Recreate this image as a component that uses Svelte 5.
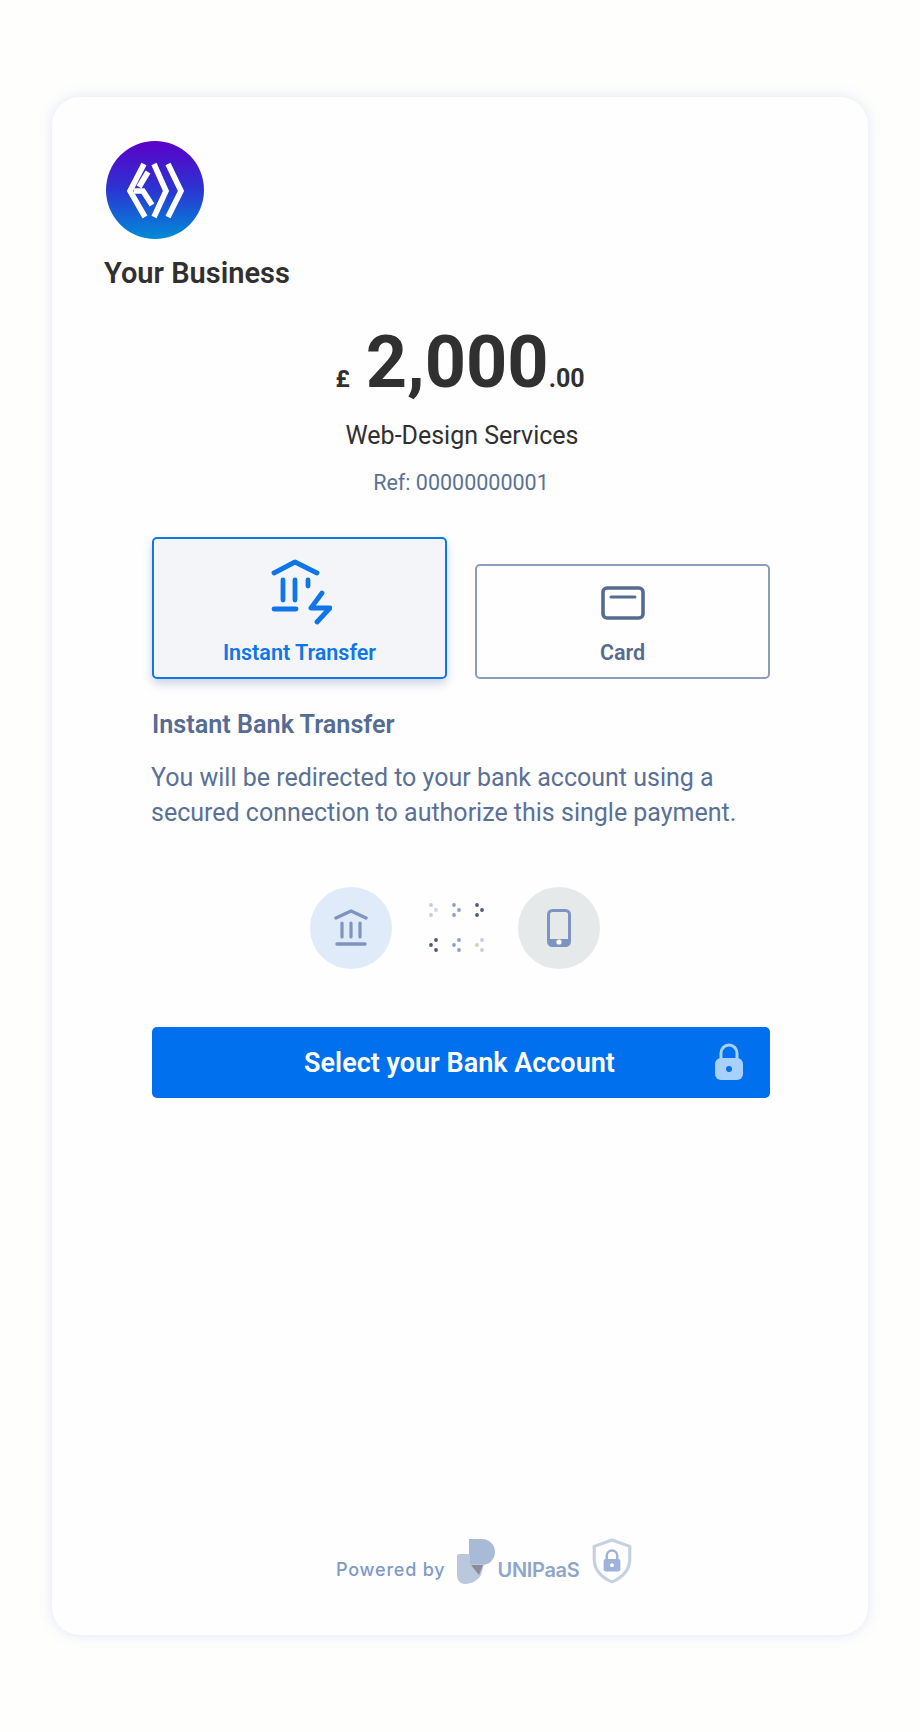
<script>
  let method = 'instant';
  const dots = [
    { x: 6, y: 3, c: '#c3cde4' }, { x: 11, y: 8, c: '#ccd5e6' }, { x: 6, y: 13, c: '#c3cde4' },
    { x: 29, y: 3, c: '#8c9fc9' }, { x: 34, y: 8, c: '#8c9fc9' }, { x: 29, y: 13, c: '#8c9fc9' },
    { x: 52, y: 3, c: '#4a5a78' }, { x: 57, y: 8, c: '#4a5a78' }, { x: 52, y: 13, c: '#4a5a78' },
    { x: 11, y: 38, c: '#4a5a78' }, { x: 6, y: 43, c: '#4a5a78' }, { x: 11, y: 48, c: '#4a5a78' },
    { x: 34, y: 38, c: '#8c9fc9' }, { x: 29, y: 43, c: '#8c9fc9' }, { x: 34, y: 48, c: '#8c9fc9' },
    { x: 57, y: 38, c: '#c3cde4' }, { x: 52, y: 43, c: '#ccd5b0' }, { x: 57, y: 48, c: '#c3cde4' }
  ];
</script>

<div class="page">
  <main class="card">
    <header class="merchant">
      <svg class="logo" viewBox="0 0 98 98" width="98" height="98">
        <defs>
          <linearGradient id="logoFill" x1="0" y1="0" x2="0" y2="1">
            <stop offset="0" stop-color="#5c00c8" />
            <stop offset="0.5" stop-color="#2a35d2" />
            <stop offset="1" stop-color="#008cd8" />
          </linearGradient>
        </defs>
        <circle cx="49" cy="49" r="49" fill="url(#logoFill)" />
        <g fill="none" stroke="#fff" stroke-width="5.6">
          <path d="M38 23 L24 50 L39 76" />
          <path d="M48 23 L60 50 L48 76" />
          <path d="M62 23 L75 50 L62 76" />
          <path d="M28 50 H37 L46 64" />
          <path d="M33 46 L42 31" />
        </g>
      </svg>
      <h1>Your Business</h1>
    </header>

    <section class="summary">
      <div class="amount"><span class="currency">£</span><span class="whole">2,000</span><span class="cents">.00</span></div>
      <div class="service">Web-Design Services</div>
      <div class="ref">Ref: 00000000001</div>
    </section>

    <section class="body">
      <div class="methods">
        <button class="method" class:active={method === 'instant'} on:click={() => (method = 'instant')}>
          <svg viewBox="-3 0 64 66" width="64" height="66" fill="none" stroke="currentColor" stroke-width="4.8" stroke-linecap="round" stroke-linejoin="round">
            <path d="M3 14 L24 3 L46 14" />
            <path d="M12 21 V41" />
            <path d="M24 21 V41" />
            <path d="M37 21 V27" />
            <path d="M3 50 H25" />
            <path d="M51 34 L40 49 H59 L46 63" />
          </svg>
          <span>Instant Transfer</span>
        </button>
        <button class="method" class:active={method === 'card'} on:click={() => (method = 'card')}>
          <svg viewBox="0 0 44 34" width="44" height="34" fill="none" stroke="currentColor" stroke-linecap="round">
            <rect x="2" y="2" width="40" height="30" rx="4" stroke-width="3.6" />
            <path d="M10 11 H34" stroke-width="3" />
          </svg>
          <span>Card</span>
        </button>
      </div>

      <h2>Instant Bank Transfer</h2>
      <p>You will be redirected to your bank account using a secured connection to authorize this single payment.</p>

      <div class="flow">
        <div class="bubble bank">
          <svg viewBox="0 0 34 38" width="34" height="38" fill="none" stroke="#7f93c0" stroke-linecap="round" stroke-linejoin="round">
            <path d="M2 9 L17 2 L32 9" stroke-width="3.4" />
            <path d="M8 14 V28 M17 14 V28 M26 14 V28" stroke-width="3.2" />
            <path d="M3 35 H31" stroke-width="3.4" />
          </svg>
        </div>
        <svg class="dots" viewBox="0 0 60 52" width="60" height="52">
          {#each dots as dot}
            <circle cx={dot.x} cy={dot.y} r="1.9" fill={dot.c} />
          {/each}
        </svg>
        <div class="bubble phone">
          <svg viewBox="0 0 24 38" width="24" height="38">
            <rect x="1.5" y="1.5" width="21" height="35" rx="4" fill="none" stroke="#7f93c0" stroke-width="3" />
            <path d="M1.5 30 H22.5 V33 a4 4 0 0 1 -4 4 H5.5 a4 4 0 0 1 -4 -4 Z" fill="#7f93c0" />
            <circle cx="12" cy="33" r="2.6" fill="#fff" />
          </svg>
        </div>
      </div>

      <button class="pay">
        <span>Select your Bank Account</span>
        <svg class="lock" viewBox="0 0 30 38" width="30" height="38">
          <path d="M7 17 V10 a8 8 0 0 1 16 0 V17" fill="none" stroke="#a9d0fb" stroke-width="3" />
          <rect x="1" y="15" width="28" height="22" rx="6" fill="#a9d0fb" />
          <circle cx="15" cy="26" r="3" fill="#0070ee" />
        </svg>
      </button>
    </section>

    <footer>
      <span class="powered">Powered by</span>
      <svg class="mark" viewBox="0 0 38 46" width="38" height="46">
        <path d="M12 1 H25 a13 13 0 0 1 0 26 H12 Z" fill="#a9bad6" />
        <path d="M0 18 Q0 16 2 16 H13 V26 H27 L24 37 C20 44 12 46 8 46 C3 46 0 42 0 37 Z" fill="#b9c8dc" />
        <path d="M14 27 H26 L22 37 Z" fill="#8a8d98" />
      </svg>
      <span class="brand">UNIPaaS</span>
      <svg class="shield" viewBox="0 0 40 44" width="42" height="46">
        <path d="M20 2 L37 8 V20 C37 31 29 38 20 42 C11 38 3 31 3 20 V8 Z" fill="none" stroke="#c5d0e2" stroke-width="3" stroke-linejoin="round" />
        <path d="M15 21 V17 a5 5 0 0 1 10 0 V21" fill="none" stroke="#9fb2dc" stroke-width="2.4" />
        <rect x="12" y="20" width="16" height="12" rx="2" fill="#9fb2dc" />
        <circle cx="20" cy="26" r="1.8" fill="#fff" />
      </svg>
    </footer>
  </main>
</div>

<style>
  :global(body) {
    margin: 0;
    background: #fefefc;
    font-family: Roboto, "Liberation Sans", sans-serif;
  }

  .page {
    height: 1732px;
    padding: 97px 52px 0;
    box-sizing: border-box;
  }

  .card {
    height: 1538px;
    box-sizing: border-box;
    background: #fefefe;
    border-radius: 28px;
    box-shadow: 0 0 14px rgba(110, 135, 225, 0.2);
    padding: 44px 0 0;
    display: flex;
    flex-direction: column;
  }

  .merchant {
    padding-left: 52px;
  }

  .logo {
    display: block;
    margin-left: 2px;
  }

  h1 {
    margin: 18px 0 0;
    font-size: 29px;
    line-height: 32px;
    font-weight: 600;
    color: #303030;
  }

  .summary {
    text-align: center;
    margin-top: 34px;
  }

  .amount {
    color: #303030;
    font-weight: 700;
    line-height: 80px;
  }

  .currency {
    font-size: 24px;
    margin-right: 16px;
  }

  .whole {
    font-size: 72px;
  }

  .cents {
    font-size: 25px;
  }

  .service {
    margin-top: -2px;
    padding-left: 4px;
    font-size: 25px;
    line-height: 32px;
    color: #303030;
  }

  .ref {
    margin-top: 16px;
    padding-left: 2px;
    font-size: 21.5px;
    line-height: 30px;
    color: #5b7196;
  }

  .body {
    margin: 0 98px 0 100px;
  }

  .methods {
    margin-top: 39px;
    display: flex;
    align-items: flex-end;
    gap: 28px;
  }

  .method {
    flex: 1;
    box-sizing: border-box;
    height: 115px;
    padding: 0 0 12px;
    border: 2px solid #8b9cbd;
    border-radius: 5px;
    background: #fefefe;
    color: #556b91;
    font: 600 21.5px/25px Roboto, sans-serif;
    display: flex;
    flex-direction: column;
    align-items: center;
    justify-content: flex-end;
    gap: 20px;
  }

  .method.active {
    height: 142px;
    border-color: #1277e4;
    background: #f3f5f8;
    color: #0f75e8;
    box-shadow: 0 5px 10px rgba(80, 105, 160, 0.28);
    gap: 15px;
  }

  h2 {
    margin: 30px 0 0;
    font-size: 25.2px;
    line-height: 32px;
    font-weight: 600;
    color: #566c93;
  }

  p {
    margin: 19px 0 0 -1px;
    font-size: 25px;
    line-height: 35px;
    color: #5a7096;
  }

  .flow {
    margin-top: 57px;
    padding-right: 12px;
    display: flex;
    justify-content: center;
    align-items: center;
    gap: 33px;
  }

  .bubble {
    width: 82px;
    height: 82px;
    border-radius: 50%;
    display: flex;
    align-items: center;
    justify-content: center;
  }

  .bank {
    background: #e0ebfa;
  }

  .phone {
    background: #e6e9ea;
  }

  .pay {
    position: relative;
    width: 100%;
    height: 71px;
    margin-top: 58px;
    border: 0;
    border-radius: 5px;
    background: #0070ee;
    color: #fff;
    font: 600 27px Roboto, sans-serif;
    padding: 0 3px 0 0;
    display: flex;
    align-items: center;
    justify-content: center;
  }

  .lock {
    position: absolute;
    right: 26px;
    top: 16px;
  }

  footer {
    margin-top: auto;
    margin-bottom: 51px;
    padding-left: 284px;
    display: flex;
    align-items: flex-end;
  }

  .powered {
    font: 500 18px Inter, sans-serif;
    letter-spacing: 0.8px;
    color: #7e9ac9;
    margin-right: 12px;
    line-height: 24px;
    margin-bottom: 2px;
  }

  .brand {
    font: 600 20px Inter, sans-serif;
    color: #8ea6cc;
    margin-left: 2px;
    line-height: 24px;
    margin-bottom: 2px;
    letter-spacing: -0.3px;
  }

  .shield {
    margin-left: 11px;
    margin-bottom: 0;
  }
</style>
